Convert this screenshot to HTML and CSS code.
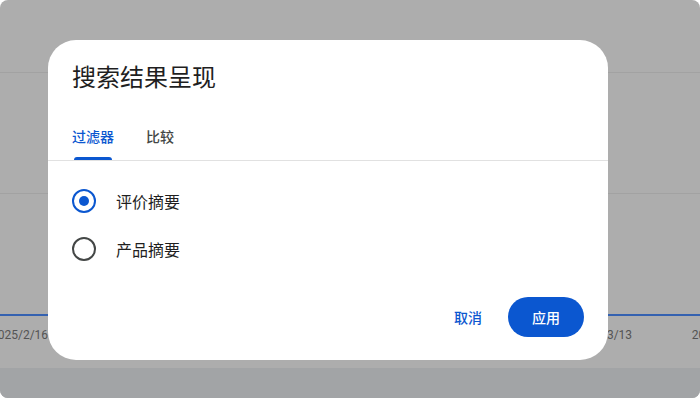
FILE: index.html
```html
<!DOCTYPE html>
<html lang="zh-CN">
<head>
<meta charset="utf-8">
<title>搜索结果呈现</title>
<link rel="stylesheet" href="styles.css">
</head>
<body>
<div class="app">
  <div class="page">
    <div class="band band-top"></div>
    <div class="band band-mid"></div>
    <div class="chart"></div>
    <div class="axis">
      <span class="tick">2025/2/16</span>
      <span class="tick">2025/2/21</span>
      <span class="tick">2025/2/26</span>
      <span class="tick">2025/3/3</span>
      <span class="tick">2025/3/8</span>
      <span class="tick">2025/3/13</span>
      <span class="tick">2025/3/18</span>
    </div>
    <div class="footer"></div>
  </div>

  <div class="dialog" role="dialog" aria-label="搜索结果呈现">
    <h2 class="dialog-title">搜索结果呈现</h2>
    <div class="tabs">
      <button class="tab tab-active">过滤器<span class="indicator"></span></button>
      <button class="tab">比较</button>
    </div>
    <div class="options">
      <label class="option">
        <span class="radio radio-on"><span class="dot"></span></span>
        <span class="option-label">评价摘要</span>
      </label>
      <label class="option">
        <span class="radio"></span>
        <span class="option-label">产品摘要</span>
      </label>
    </div>
    <div class="actions">
      <button class="btn-text">取消</button>
      <button class="btn-filled">应用</button>
    </div>
  </div>
</div>
</body>
</html>
```

FILE: styles.css
```css
* { box-sizing: border-box; }

html, body {
  margin: 0;
  padding: 0;
  background: #ffffff;
}

body {
  font-family: Roboto, "Noto Sans CJK SC", "Noto Sans", sans-serif;
}

.app {
  position: relative;
  width: 700px;
  height: 398px;
  border-radius: 8px;
  overflow: hidden;
  background: #adadad;
}

.page {
  display: flex;
  flex-direction: column;
  height: 100%;
}

.band-top {
  height: 73px;
  border-bottom: 1px solid #a2a2a2;
}

.band-mid {
  height: 121px;
  border-bottom: 1px solid #a2a2a2;
}

.chart {
  height: 122px;
  border-bottom: 2px solid #3461b0;
}

.axis {
  flex: 1;
  display: flex;
  align-items: center;
  margin-left: -9px;
  padding-bottom: 14px;
  white-space: nowrap;
}

.tick {
  flex: 0 0 116.8px;
  font-size: 12px;
  color: #545454;
  letter-spacing: 0;
}

.footer {
  height: 30px;
  background: #a2a4a6;
}

/* dialog */
.dialog {
  position: absolute;
  left: 48px;
  top: 40px;
  width: 560px;
  height: 320px;
  background: #ffffff;
  border-radius: 28px;
  padding: 22px 0 23px;
  display: flex;
  flex-direction: column;
}

.dialog-title {
  margin: 0 24px 18px;
  font-size: 24px;
  line-height: 32px;
  font-weight: 400;
  color: #1f1f1f;
}

.tabs {
  display: flex;
  height: 49px;
  padding-left: 8px;
  border-bottom: 1px solid #e1e1e1;
}

.tab {
  position: relative;
  height: 48px;
  padding: 0 16px;
  border: 0;
  background: none;
  font-family: inherit;
  font-size: 14px;
  font-weight: 500;
  color: #444746;
  cursor: pointer;
}

.tab-active {
  color: #0b57d0;
}

.indicator {
  position: absolute;
  left: 18px;
  right: 18px;
  bottom: 0;
  height: 3px;
  border-radius: 3px 3px 0 0;
  background: #0b57d0;
}

.options {
  display: flex;
  flex-direction: column;
  padding: 16px 0 0 16px;
}

.option {
  display: flex;
  align-items: center;
  height: 48px;
}

.radio {
  width: 40px;
  height: 40px;
  display: flex;
  align-items: center;
  justify-content: center;
  position: relative;
}

.radio::before {
  content: "";
  width: 20px;
  height: 20px;
  border-radius: 50%;
  border: 2px solid #444746;
}

.radio-on::before {
  border-color: #0b57d0;
}

.dot {
  position: absolute;
  width: 10px;
  height: 10px;
  border-radius: 50%;
  background: #0b57d0;
}

.option-label {
  margin-left: 12px;
  font-size: 16px;
  color: #1f1f1f;
}

.actions {
  margin-top: auto;
  display: flex;
  justify-content: flex-end;
  align-items: center;
  gap: 14px;
  padding: 0 24px;
}

.btn-text,
.btn-filled {
  height: 40px;
  border: 0;
  border-radius: 20px;
  font-family: inherit;
  font-size: 14px;
  font-weight: 500;
  cursor: pointer;
}

.btn-text {
  padding: 0 12px;
  background: none;
  color: #0b57d0;
}

.btn-filled {
  padding: 0 24px;
  background: #0b57d0;
  color: #ffffff;
}
```
